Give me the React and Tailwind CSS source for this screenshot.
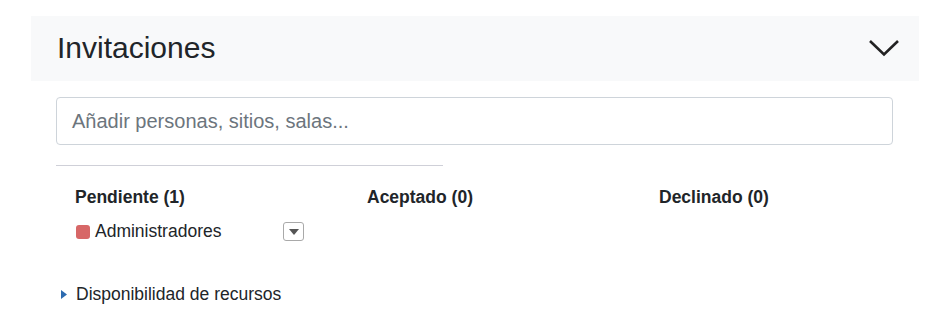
export default function App() {
  const font = { fontFamily: '"Liberation Sans", Arial, sans-serif' };
  return (
    <div className="w-[939px] h-[315px] bg-white overflow-hidden pt-[16px] pl-[31px] pr-[20px] text-[#212529]" style={font}>
      <div className="h-[65px] bg-[#f8f9fa] flex items-center justify-between pl-[26px] pr-[19px]">
        <h2 className="text-[30px] leading-none font-normal text-[#212529] -mt-[2px]">Invitaciones</h2>
        <svg width="32" height="18" viewBox="0 0 32 18" className="-mt-[1px]">
          <path d="M2 2 L16 15.5 L30 2" fill="none" stroke="#222" strokeWidth="2.6" />
        </svg>
      </div>
      <div className="pl-[25px] pr-[26px]">
        <div className="mt-[16px] h-[48px] border border-[#ced4da] rounded-[4px] flex items-center pl-[15px]">
          <span className="text-[20px] text-[#6c757d]">Añadir personas, sitios, salas...</span>
        </div>
        <div className="mt-[20px] h-px w-[387px] bg-[#cfd0d8]" />
        <div className="mt-[20px] pl-[19px] grid grid-cols-[292px_292px_292px]">
          <div>
            <div className="text-[17.5px] leading-[22px] font-bold">Pendiente (1)</div>
            <div className="mt-[12px] flex items-center h-[22px] w-[229px]">
              <span className="w-[14px] h-[14px] rounded-[3px] bg-[#d76767] ml-[1px] mr-[5px] mt-[2px]" />
              <span className="text-[17.5px] leading-[22px]">Administradores</span>
              <span className="ml-auto w-[21px] h-[19px] border border-[#a9a9a9] rounded-[3px] flex items-center justify-center mt-[1px]">
                <svg width="10" height="6" viewBox="0 0 10 6">
                  <path d="M0 0 L10 0 L5 6 Z" fill="#555" />
                </svg>
              </span>
            </div>
          </div>
          <div className="text-[17.5px] leading-[22px] font-bold">Aceptado (0)</div>
          <div className="text-[17.5px] leading-[22px] font-bold">Declinado (0)</div>
        </div>
        <div className="mt-[41px] flex items-center h-[22px]">
          <svg width="6" height="9" viewBox="0 0 6 9" className="ml-[5px] mr-[9px] mt-[1px]">
            <path d="M0 0 L6 4.5 L0 9 Z" fill="#2d6bb0" />
          </svg>
          <span className="text-[17.5px] leading-[22px]">Disponibilidad de recursos</span>
        </div>
      </div>
    </div>
  );
}
